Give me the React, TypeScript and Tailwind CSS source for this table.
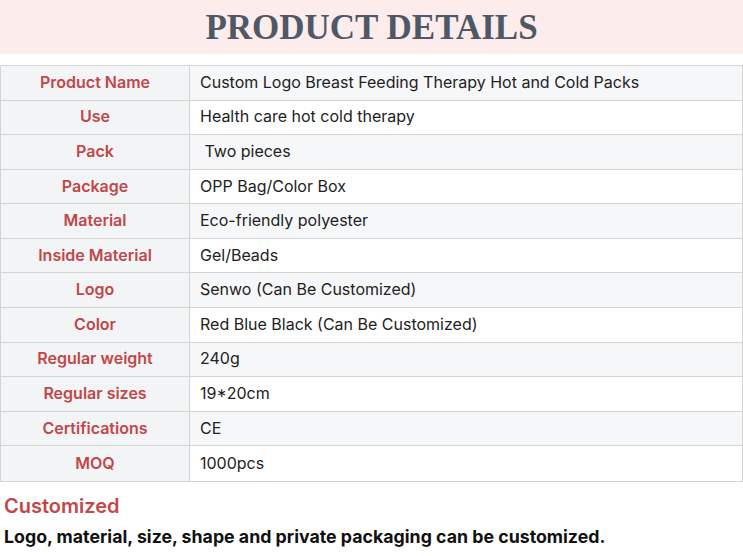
import React from "react";

const rows: [string, string][] = [
  ["Product Name", "Custom Logo Breast Feeding Therapy Hot and Cold Packs"],
  ["Use", "Health care hot cold therapy"],
  ["Pack", "\u00a0Two pieces"],
  ["Package", "OPP Bag/Color Box"],
  ["Material", "Eco-friendly polyester"],
  ["Inside Material", "Gel/Beads"],
  ["Logo", "Senwo (Can Be Customized)"],
  ["Color", "Red Blue Black (Can Be Customized)"],
  ["Regular weight", "240g"],
  ["Regular sizes", "19*20cm"],
  ["Certifications", "CE"],
  ["MOQ", "1000pcs"],
];

export default function App() {
  return (
    <div className="w-[743px] h-[556px] bg-white overflow-hidden" style={{ fontFamily: "Inter, 'Noto Sans', sans-serif" }}>
      <div className="h-[54px] bg-[#fdecec] flex items-center justify-center">
        <h1
          className="text-[35px] font-bold text-[#4e5866] leading-none pt-[1px]"
          style={{ fontFamily: "'Liberation Serif', 'Times New Roman', serif" }}
        >
          PRODUCT DETAILS
        </h1>
      </div>
      <div className="mt-[11px] border border-[#d4d4d4]">
        {rows.map(([k, v], i) => (
          <div
            key={k}
            className={`flex h-[34.58px] ${i < rows.length - 1 ? "border-b border-[#d4d4d4]" : ""}`}
          >
            <div className="w-[189px] shrink-0 bg-[#f3f4f6] border-r border-[#d4d4d4] flex items-center justify-center pb-[2px] text-[16px] font-semibold text-[#c0474a]">
              {k}
            </div>
            <div
              className={`flex-1 flex items-center pl-[10px] pb-[2px] text-[16px] text-[#222222] ${i % 2 === 0 ? "bg-[#f6f7f9]" : "bg-white"}`}
            >
              {v}
            </div>
          </div>
        ))}
      </div>
      <div className="px-[4px] pt-[12px]">
        <div className="text-[20px] font-semibold text-[#c0474a] leading-[24px]">Customized</div>
        <div className="mt-[8px] text-[17.75px] font-bold text-[#111111] leading-[22px]">
          Logo, material, size, shape and private packaging can be customized.
        </div>
      </div>
    </div>
  );
}
